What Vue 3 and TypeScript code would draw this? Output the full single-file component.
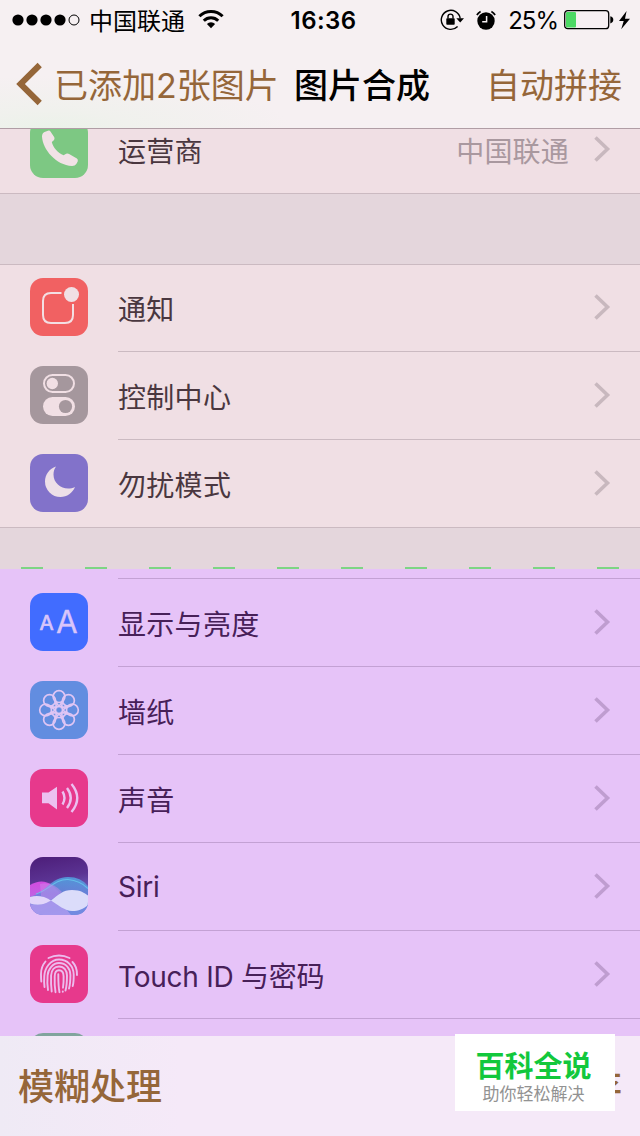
<script setup lang="ts">
import { ref } from 'vue'

interface Item {
  icon: string
  label: string
  value?: string
}

const carrier = ref<Item>({ icon: 'phone', label: '运营商', value: '中国联通' });
const upper = ref<Item[]>([
  { icon: 'notice', label: '通知' },
  { icon: 'control', label: '控制中心' },
  { icon: 'moon', label: '勿扰模式' },
]);
const lower = ref<Item[]>([
  { icon: 'display', label: '显示与亮度' },
  { icon: 'wallpaper', label: '墙纸' },
  { icon: 'sound', label: '声音' },
  { icon: 'siri', label: 'Siri' },
  { icon: 'touch', label: 'Touch ID 与密码' },
  { icon: 'battery', label: '' },
]);
const groups = [
  { name: 'carrier', items: [carrier.value] },
  { name: 'upper', items: upper.value },
  { name: 'lower', items: lower.value },
];
const petals = [0, 45, 90, 135, 180, 225, 270, 315];
const isLatin = (text: string): boolean => /^[A-Z]/.test(text);
</script>

<template>
  <main class="screen">
    <header class="top">
      <div class="status">
        <div class="status-left">
          <svg width="68" height="14" viewBox="0 0 68 14">
            <circle v-for="n in 4" :key="n" :cx="n * 14 - 8" cy="7" r="5.6" />
            <circle cx="62" cy="7" r="5" fill="none" stroke="#000" stroke-width="1" />
          </svg>
          <span class="operator">中国联通</span>
          <svg class="wifi" width="26" height="20" viewBox="0 0 26 20" fill="none" stroke="#000" stroke-width="3">
            <path d="M1.4 7.2a16.4 16.4 0 0 1 23.2 0" />
            <path d="M5.8 11.8a10.2 10.2 0 0 1 14.4 0" />
            <path d="M8.9 15a5.8 5.8 0 0 1 8.2 0L13 19.2z" fill="#000" stroke="none" />
          </svg>
        </div>
        <span class="clock">16:36</span>
        <div class="status-right">
          <svg width="24" height="22" viewBox="0 0 24 22">
            <path d="M17.6 17.5A9.5 9.5 0 1 1 20.2 9.5" fill="none" stroke="#000" stroke-width="1.4" />
            <path d="M16.3 9.3H24L20.2 13.6z" />
            <rect x="6.3" y="9.2" width="8.4" height="6.6" rx=".8" />
            <path d="M8 9.5V7.6a2.5 2.5 0 0 1 5 0v1.9" fill="none" stroke="#000" stroke-width="1.4" />
          </svg>
          <svg class="alarm" width="20" height="20" viewBox="0 0 20 20">
            <circle cx="10" cy="11" r="8.7" />
            <path d="M.9 5A9 9 0 0 1 4.6 1.4M15.4 1.4A9 9 0 0 1 19.1 5" fill="none" stroke="#000" stroke-width="1.7" />
            <path d="M10.6 6v5.7H6.2" fill="none" stroke="#f5f0f2" stroke-width="1.5" />
          </svg>
          <span class="percent">25%</span>
          <svg width="67" height="20" viewBox="0 0 67 20">
            <rect x=".7" y=".7" width="44" height="18" rx="3" fill="none" stroke="#000" stroke-width="1.3" />
            <rect x="2" y="2" width="10" height="15.4" rx="1" fill="#4cd964" />
            <path d="M46.3 6.2q3 .8 3 3.6t-3 3.6z" />
            <path d="M62.6 1 55 11h4.7l-2.5 8.2L66 8.7h-5z" />
          </svg>
        </div>
      </div>
      <nav class="nav">
        <div class="back">
          <svg width="26" height="44" viewBox="0 0 26 44">
            <path d="M23.7 3 4.500 22l19.200 19" fill="none" stroke="#956639" stroke-width="6" />
          </svg>
          <span>已添加2张图片</span>
        </div>
        <h1>图片合成</h1>
        <span class="auto">自动拼接</span>
      </nav>
    </header>

    <div class="list">
      <section v-for="g in groups" :key="g.name" :class="['group', g.name]">
        <div v-if="g.name === 'lower'" class="seam">
          <svg width="640" height="2" viewBox="0 0 640 2">
            <path d="M21 1H640" fill="none" stroke="#7dd584" stroke-width="2" stroke-dasharray="22 42" />
          </svg>
          <div class="seam-line"></div>
        </div>
        <div v-for="item in g.items" :key="item.icon" class="row">
          <svg :class="['icon', item.icon]" width="58" height="58" viewBox="0 0 58 58">
            <template v-if="item.icon === 'phone'">
              <path d="M14.5 12l3.5-1.300q1.800-.4 2.800 1.200l3.500 5.400q.8 1.800-.7 3.100l-1.800 1.700c1.200 5.700 6 10.700 11.800 13.200l2.500-1.500q1.600-.8 3 .3l7.800 4.400q1.500 1.200.8 3l-1.400 2.500q-1.300 2-4.200 2C26 45.200 12.700 29.500 12 16.500q0-3.500 2.500-4.500z" fill="#f1e2e6" />
            </template>
            <template v-else-if="item.icon === 'notice'">
              <path d="M31.5 15H21q-8 0-8 8v14q0 8 8 8h14q8 0 8-8V26" fill="none" stroke="#f3dfe3" stroke-width="2" />
              <circle cx="41.5" cy="16.5" r="7.5" fill="#f1dfe4" />
            </template>
            <template v-else-if="item.icon === 'control'">
              <rect x="14" y="9" width="30" height="17" rx="8.5" fill="none" stroke="#f1dfe4" stroke-width="2" />
              <circle cx="22.3" cy="17.5" r="5.7" fill="#f1dfe4" />
              <rect x="13" y="31" width="32" height="19" rx="9.5" fill="#f1dfe4" />
              <circle cx="35.5" cy="40.5" r="6.6" fill="#a5979d" />
            </template>
            <template v-else-if="item.icon === 'moon'">
              <path d="M26 12.5C19.500 14.500 15 20.500 15 27.500A15.500 15.500 0 0 0 30.500 43C37 43 42.500 39 45 33c-10 4.800-21.500-2-21.500-12.500 0-3.200 1-5.800 2.500-8z" fill="#eddfe8" />
            </template>
            <template v-else-if="item.icon === 'display'">
              <text x="9.5" y="37" font-size="20.5" stroke-width=".7">A</text>
              <text x="26" y="40" font-size="31.5" stroke-width=".3">A</text>
            </template>
            <template v-else-if="item.icon === 'wallpaper'">
              <g fill="none" stroke="#dfc5f4" stroke-width="1.7">
                <g v-for="a in petals" :key="a" :transform="`rotate(${a} 29 29)`">
                  <circle cx="29" cy="15.6" r="5.9" />
                  <path d="M24.2 19 29 25.300 33.800 19" />
                </g>
                <circle cx="29" cy="29" r="3.6" />
              </g>
            </template>
            <template v-else-if="item.icon === 'sound'">
              <path d="M12 23.5h6.500L27 17.700v22.800l-8.500-6.300H12z" fill="#ecc0f0" />
              <path d="M32.5 22.500q4 6.500 0 13M37 19q7.500 10 0 20M41.500 15q11.500 14 0 28" fill="none" stroke="#ecc0f0" stroke-width="2.4" />
            </template>
            <template v-else-if="item.icon === 'siri'">
              <defs>
                <linearGradient id="sky" x1="0" y1="0" x2=".2" y2="1">
                  <stop offset="0" stop-color="#4c1d78" />
                  <stop offset=".45" stop-color="#5b3393" />
                  <stop offset="1" stop-color="#8185df" />
                </linearGradient>
                <linearGradient id="pink" x1="0" y1="0" x2="0" y2="1">
                  <stop offset="0" stop-color="#d24ae0" />
                  <stop offset="1" stop-color="#a981e4" />
                </linearGradient>
                <linearGradient id="blue" x1="0" y1="0" x2="0" y2="1">
                  <stop offset="0" stop-color="#50aee8" />
                  <stop offset=".45" stop-color="#6585dc" />
                  <stop offset="1" stop-color="#6f8ce2" />
                </linearGradient>
              </defs>
              <rect width="58" height="58" fill="url(#sky)" />
              <path d="M0 28q12-7 22 0l16 16-38 14z" fill="url(#pink)" />
              <path d="M0 40C15 36 21 20 38 20q13 0 20 9v29H0z" fill="url(#blue)" opacity=".8" />
              <path d="M6 37C19 33 25 22 38 22.500q12 1 20 9" fill="none" stroke="#67cbed" stroke-width="1.2" opacity=".8" />
              <path d="M10 27q12-3 22 8l-11 8-10-4z" fill="#d18bed" opacity=".45" />
              <path d="M0 47q12 3 21-4 12 4 20 15H0z" fill="#b49cf0" opacity=".75" />
              <path d="M0 40q11-3 21 3.500Q11 50 0 46.500z" fill="#e2d5fa" />
              <path d="M21 43.5C28 38 33 33 42 33S54 36 58 38.500V48c-5 4-9 6-16 6S28 48 21 43.500z" fill="#dbdcfa" />
            </template>
            <template v-else-if="item.icon === 'touch'">
              <g fill="none" stroke="#ecbcee" stroke-width="1.9" stroke-linecap="round">
                <path d="M18.5 13q10.500-5 21 0M11 29c0-5 1.500-9 4.500-12.500M42.500 17q4.800 5 4.500 13M11.300 36.500C11 34 11 31 11 29" />
                <path d="M14.5 42c-.5-4-.5-7-.2-11 .5-8 6-16.500 14.700-16.500 8.500 0 14.500 6.500 14.700 15 .1 5 0 8-1 11.500" />
                <path d="M18 45c-1-6-.8-10-.4-14.500C18 24 23 18 29 18c7 0 11.400 5.500 11.400 12 0 5-.2 9.500-1.400 13.500" />
                <path d="M21.7 46.500c-.8-6-.8-11-.6-16 .3-5.500 3.400-9 7.900-9 5 0 8 4 8 9 0 5.500-.1 10-1.500 15" />
                <path d="M25.5 47.200c-.8-5-1-11-.8-16 .1-4 1.600-6 4.300-6 3 0 4.500 2.500 4.600 6 .1 4-.1 8-.6 11.500M29.500 47.200c-1.200-5-1.200-10-1.200-18M32.800 46.500v.2" />
              </g>
            </template>
          </svg>
          <div class="body">
            <span :class="['label', { latin: isLatin(item.label) }]">{{ item.label }}</span>
            <span v-if="item.value" class="value">{{ item.value }}</span>
            <svg class="arrow" width="18" height="28" viewBox="0 0 18 28">
              <path d="M2.5 2.500 14.500 14 2.500 25.500" fill="none" stroke-width="3.6" />
            </svg>
          </div>
        </div>
      </section>
    </div>

    <footer class="toolbar">
      <span>模糊处理</span>
      <span class="save">存</span>
      <aside class="badge">
        <strong>百科全说</strong>
        <small>助你轻松解决</small>
      </aside>
    </footer>
  </main>
</template>

<style>
body {
  margin: 0;
  overflow: hidden;
}
</style>

<style scoped>
.screen {
  display: flex;
  flex-direction: column;
  width: 640px;
  height: 1136px;
  overflow: hidden;
  background: #e4d6dc;
  color: #4a373f;
  font-family: Inter, "Noto Sans CJK SC", sans-serif;
}

svg {
  display: block;
  flex: none;
}

.top {
  flex: none;
  box-sizing: border-box;
  height: 129px;
  border-bottom: 1px solid #b09da5;
  background: radial-gradient(ellipse at 50px 128px, #ebf2e9 0, #f0f1ed 80px, #f6f0f2 240px);
  color: #000;
}

.status {
  display: grid;
  grid-template-columns: 1fr auto 1fr;
  align-items: center;
  box-sizing: border-box;
  height: 40px;
  padding: 0 9px 0 12px;
}

.status-left,
.status-right {
  display: flex;
  align-items: center;
}

.status-right {
  justify-content: flex-end;
}

.operator {
  margin-left: 9px;
  padding-top: 3px;
  font-size: 24px;
  line-height: 37px;
}

.wifi {
  margin-left: 13px;
  margin-bottom: 3px;
}

.clock {
  padding: 1px 0 0 4px;
  font-size: 24px;
  font-weight: 600;
  letter-spacing: 0.4px;
}

.alarm {
  margin-left: 12px;
}

.percent {
  margin: 1px 6px 0 12px;
  font-size: 24px;
  letter-spacing: -1px;
}

.nav {
  display: flex;
  align-items: center;
  box-sizing: border-box;
  height: 88px;
  padding: 4px 18px 0 16px;
  font-size: 34px;
  line-height: 50px;
}

.nav svg {
  margin: 0 12px 4px 0;
}

.back {
  display: flex;
  align-items: center;
  width: 278px;
  white-space: nowrap;
  color: #956639;
}

.nav h1 {
  margin: 0;
  font-size: 34px;
  font-weight: 500;
}

.auto {
  margin-left: auto;
  color: #956639;
}

.list {
  flex: 1;
  min-height: 0;
  overflow: hidden;
}

.group {
  background: #f0dfe4;
}

.carrier {
  margin-top: -23px;
  border-bottom: 1px solid #cbbac1;
}

.upper {
  margin-top: 70px;
  border-top: 1px solid #cbbac1;
  border-bottom: 1px solid #cbbac1;
}

.lower {
  margin-top: 39px;
  background: #e6c3f8;
  color: #472058;
}

.seam {
  display: flex;
  flex-direction: column;
  justify-content: space-between;
  height: 12px;
}

.seam > svg {
  background: #e4d6dc;
}

.seam-line {
  height: 1px;
  margin-left: 118px;
  background: #c3a1d4;
}

.row {
  display: flex;
  height: 88px;
  padding-left: 30px;
}

.carrier .row,
.upper .row:first-child,
.upper .row:last-child {
  height: 87px;
}

.icon {
  margin: 14px 30px 0 0;
  border-radius: 13px;
}

.upper .row:first-child .icon {
  margin-top: 13px;
}

.body {
  display: flex;
  flex: 1;
  align-items: center;
  box-sizing: border-box;
  padding: 0 29px 0 0;
  border-bottom: 1px solid #cbbac1;
  font-size: 28px;
}

.carrier .body,
.upper .row:last-child .body {
  border-bottom: 0;
}

.label {
  flex: 1;
  letter-spacing: 0.3px;
}

.latin {
  letter-spacing: -0.25px;
}

.value {
  margin-right: 24px;
  letter-spacing: 0.2px;
  color: #a9989f;
}

.arrow {
  margin-bottom: 2px;
  stroke: #c8b8be;
}

.lower .body {
  border-color: #c3a1d4;
}

.lower .arrow {
  stroke: #bf9dd0;
}

.phone {
  background: #7dc883;
}

.notice {
  background: #f16162;
}

.control {
  background: #a5979d;
}

.moon {
  background: #8272ca;
}

.display {
  background: #416cff;
  fill: #d9c5fa;
  stroke: #d9c5fa;
}

.wallpaper {
  background: #628de0;
}

.sound,
.touch {
  background: #e7398c;
}

.battery {
  background: #81a49d;
}

.toolbar {
  position: relative;
  display: flex;
  flex: none;
  align-items: center;
  justify-content: space-between;
  box-sizing: border-box;
  height: 100px;
  padding: 0 18px 4px;
  background: linear-gradient(90deg, #efeaf5, #f5e9f8 180px);
  color: #956639;
  font-size: 36px;
  font-weight: 500;
}

.save {
  display: flex;
  justify-content: flex-end;
  width: 7px;
  overflow: hidden;
}

.badge {
  position: absolute;
  top: -2px;
  left: 455px;
  display: flex;
  flex-direction: column;
  align-items: center;
  box-sizing: border-box;
  width: 160px;
  height: 77px;
  padding: 15px 3px 0 0;
  background: #fff;
}

.badge strong {
  color: #12c83c;
  font-size: 29px;
  font-weight: 700;
  line-height: 36px;
}

.badge small {
  margin-top: -1px;
  color: #929292;
  font-size: 17px;
  font-weight: 400;
  line-height: 20px;
}
</style>
